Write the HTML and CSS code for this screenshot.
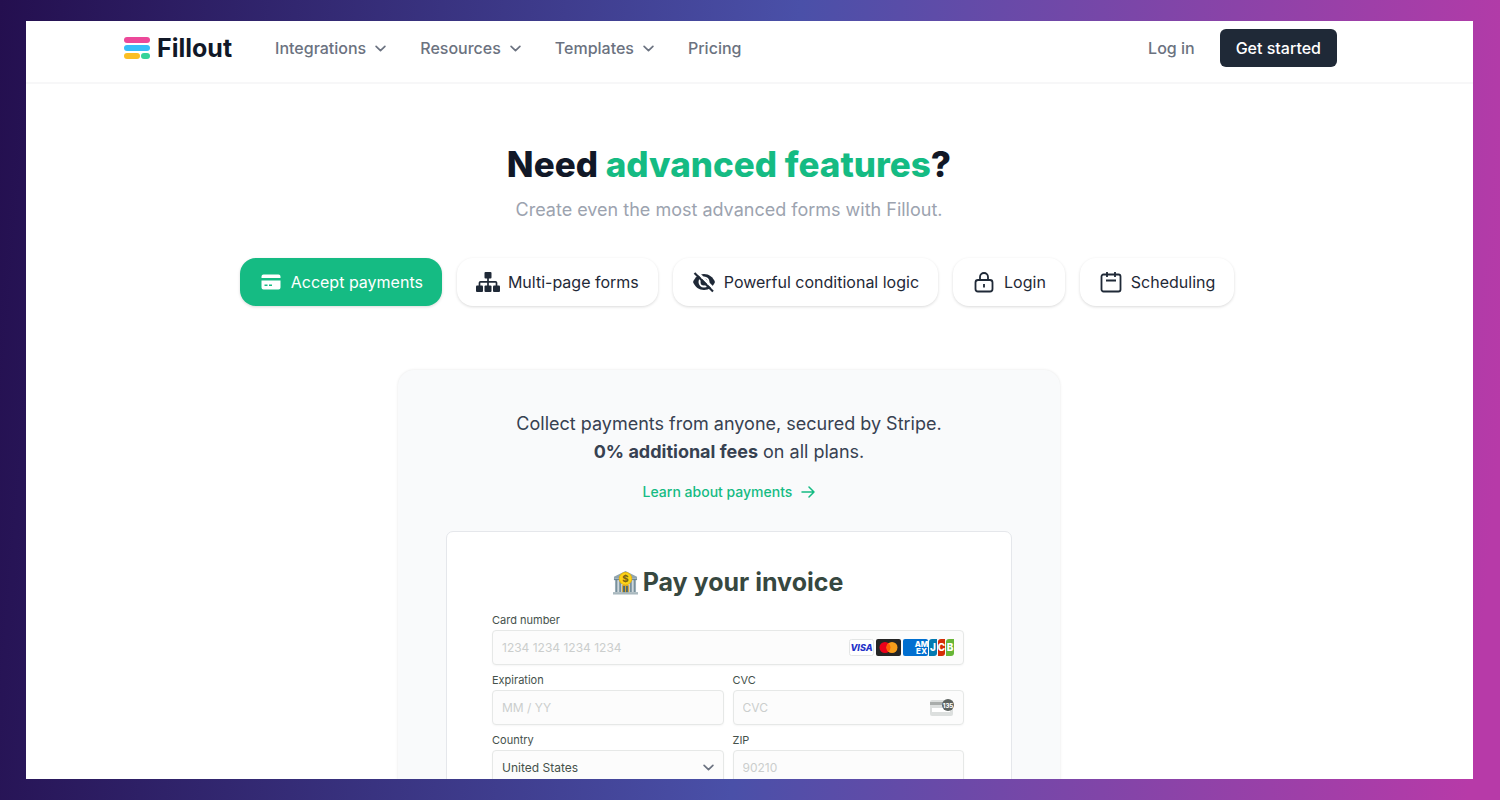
FILE: index.html
```
<!DOCTYPE html>
<html lang="en">
<head>
    <meta charset="UTF-8">
    <meta name="viewport" content="width=device-width, initial-scale=1.0">
    <title>Fillout</title>
    <link rel="stylesheet" href="styles.css">
</head>
<body>
    <div class="page">
        <header class="header">
            <div class="header-inner">
                <a href="#" class="logo">
                    <svg width="26" height="22" viewBox="0 0 26 22">
                        <rect x="0" y="0" width="26" height="6" rx="3" fill="#ec4899"/>
                        <rect x="0" y="8" width="26" height="6" rx="3" fill="#38bdf8"/>
                        <rect x="0" y="16" width="16" height="6" rx="3" fill="#fbbf24"/>
                        <rect x="17" y="16" width="9" height="6" rx="3" fill="#34d399"/>
                    </svg>
                    <span>Fillout</span>
                </a>
                <nav class="nav">
                    <button type="button" class="nav-item">Integrations
                        <svg class="chevron" viewBox="0 0 10 6"><path d="M1 1l4 4 4-4"/></svg>
                    </button>
                    <button type="button" class="nav-item">Resources
                        <svg class="chevron" viewBox="0 0 10 6"><path d="M1 1l4 4 4-4"/></svg>
                    </button>
                    <button type="button" class="nav-item">Templates
                        <svg class="chevron" viewBox="0 0 10 6"><path d="M1 1l4 4 4-4"/></svg>
                    </button>
                    <a href="#" class="nav-item">Pricing</a>
                </nav>
                <div class="account">
                    <a href="#" class="nav-item">Log in</a>
                    <button type="button" class="start">Get started</button>
                </div>
            </div>
        </header>

        <main class="main">
            <h1 class="title">Need <span>advanced features</span>?</h1>
            <p class="subtitle">Create even the most advanced forms with Fillout.</p>

            <div class="tabs">
                <button type="button" class="tab active">
                    <svg width="24" height="24" viewBox="0 0 24 24" fill="currentColor">
                        <path d="M2.500 8V6.500a2 2 0 0 1 2-2h15a2 2 0 0 1 2 2V8z"/>
                        <path fill-rule="evenodd" d="M2.500 10.500h19v7a2 2 0 0 1-2 2h-15a2 2 0 0 1-2-2zM5.500 14.500v1.500h3v-1.500zM10 14.500v1.500h3v-1.500z"/>
                    </svg>
                    Accept payments
                </button>
                <button type="button" class="tab">
                    <svg width="24" height="24" viewBox="0 0 24 24" fill="currentColor">
                        <rect x="8.500" y="2" width="7" height="6.500" rx="1"/>
                        <rect x="0" y="15.500" width="7" height="6.500" rx="1"/>
                        <rect x="8.500" y="15.500" width="7" height="6.500" rx="1"/>
                        <rect x="17" y="15.500" width="7" height="6.500" rx="1"/>
                        <path d="M12 8v8M3.500 16v-3.200a1 1 0 0 1 1-1h15a1 1 0 0 1 1 1V16" fill="none" stroke="currentColor" stroke-width="1.700"/>
                    </svg>
                    Multi-page forms
                </button>
                <button type="button" class="tab">
                    <svg width="24" height="24" viewBox="0 0 24 24">
                        <path d="M1 12c2-5 6-8 11-8s9 3 11 8c-2 5-6 8-11 8s-9-3-11-8z" fill="currentColor"/>
                        <circle cx="12" cy="12" r="4.500" fill="none" stroke="#fff" stroke-width="2"/>
                        <path d="M4.500 1.500L23 20" stroke="#fff" stroke-width="2.500"/>
                        <path d="M2.500 3L21 21.500" stroke="currentColor" stroke-width="2.200"/>
                    </svg>
                    Powerful conditional logic
                </button>
                <button type="button" class="tab">
                    <svg width="24" height="24" viewBox="0 0 24 24" fill="none" stroke="currentColor" stroke-width="1.800">
                        <rect x="3.500" y="10" width="17" height="11.500" rx="2.500"/>
                        <path d="M8 10V7a4 4 0 0 1 8 0v3M12 14v3.500"/>
                    </svg>
                    Login
                </button>
                <button type="button" class="tab">
                    <svg width="24" height="24" viewBox="0 0 24 24" fill="none" stroke="currentColor" stroke-width="1.800">
                        <rect x="2.500" y="4.500" width="19" height="17" rx="2"/>
                        <path d="M8 2v5M16 2v5M7 10.500h10"/>
                    </svg>
                    Scheduling
                </button>
            </div>

            <section class="card">
                <p class="card-text">Collect payments from anyone, secured by Stripe.<br><strong>0% additional fees</strong> on all plans.</p>
                <a href="#" class="learn">Learn about payments
                    <svg width="14" height="12" viewBox="0 0 14 12"><path d="M1 6h12M8 1l5 5-5 5"/></svg>
                </a>

                <form class="invoice">
                    <h2 class="invoice-title">
                        <!-- bank with coin -->
                        <svg width="25" height="25" viewBox="0 0 26 26">
                            <path d="M1 7L13 1l12 6v3H1z" fill="#90a4ae"/>
                            <rect x="2" y="9" width="22" height="14" fill="#cfd8dc"/>
                            <path d="M3.500 10v13M7.500 10v13M18.500 10v13M22.500 10v13" stroke="#78909c" stroke-width="2"/>
                            <path d="M1 10h24" stroke="#607d8b"/>
                            <rect x="10" y="16" width="6" height="8" fill="#4c6a70"/>
                            <path d="M10 16h6v8M13 16v8M10 16v8" fill="none" stroke="#e0a526"/>
                            <rect x="0" y="23" width="26" height="2.500" fill="#a9b8be"/>
                            <circle cx="13" cy="9" r="6.500" fill="#fdd316" stroke="#e8b407"/>
                            <text x="13" y="12.500" class="coin">$</text>
                        </svg>
                        Pay your invoice
                    </h2>
                    <div class="fields">
                        <div class="field wide">
                            <label for="number">Card number</label>
                            <div class="control">
                                <input type="text" id="number" placeholder="1234 1234 1234 1234">
                                <svg width="105" height="18" viewBox="0 0 105 18">
                                    <rect x="0.500" y="0.500" width="24" height="16" rx="2" fill="#fff" stroke="#e3e5e5"/>
                                    <text x="12.500" y="12" class="visa">VISA</text>
                                    <rect x="27" y="0" width="25" height="17" rx="2" fill="#252525"/>
                                    <circle cx="36" cy="8.500" r="5.500" fill="#eb001b"/>
                                    <circle cx="43" cy="8.500" r="5.500" fill="#f79e1b"/>
                                    <path d="M39.500 4.300a5.500 5.500 0 0 1 0 8.400a5.500 5.500 0 0 1 0-8.400z" fill="#ff5f00"/>
                                    <rect x="54" y="0" width="25" height="17" rx="2" fill="#016fd0"/>
                                    <text x="72.500" y="8" class="amex">AM</text>
                                    <text x="72.500" y="15" class="amex">EX</text>
                                    <path d="M80 3q0-3 3-3h5v14q0 3-3 3h-5z" fill="#047ab1"/>
                                    <path d="M89 3q0-3 3-3h4v14q0 3-3 3h-4z" fill="#d42d06"/>
                                    <path d="M97 3q0-3 3-3h5v14q0 3-3 3h-5z" fill="#67b637"/>
                                    <text x="84" y="12" class="jcb">J</text>
                                    <text x="92.500" y="12" class="jcb">C</text>
                                    <text x="101" y="12" class="jcb">B</text>
                                </svg>
                            </div>
                        </div>
                        <div class="field">
                            <label for="expiration">Expiration</label>
                            <div class="control">
                                <input type="text" id="expiration" placeholder="MM / YY">
                            </div>
                        </div>
                        <div class="field">
                            <label for="cvc">CVC</label>
                            <div class="control">
                                <input type="text" id="cvc" placeholder="CVC">
                                <svg width="24" height="18" viewBox="0 0 24 18">
                                    <rect x="0" y="1" width="23" height="16" rx="2" fill="#dcdfde"/>
                                    <rect x="0" y="3" width="23" height="3" fill="#a9adab"/>
                                    <rect x="2" y="9" width="18" height="4" fill="#fff"/>
                                    <circle cx="18" cy="6" r="6" fill="#5c625f"/>
                                    <text x="18" y="8.500" class="code">135</text>
                                </svg>
                            </div>
                        </div>
                        <div class="field">
                            <label for="country">Country</label>
                            <div class="control">
                                <select id="country">
                                    <option>United States</option>
                                </select>
                                <svg class="chevron" viewBox="0 0 10 6"><path d="M1 1l4 4 4-4"/></svg>
                            </div>
                        </div>
                        <div class="field">
                            <label for="zip">ZIP</label>
                            <div class="control">
                                <input type="text" id="zip" placeholder="90210">
                            </div>
                        </div>
                    </div>
                </form>
            </section>
        </main>
    </div>
</body>
</html>
```
FILE: styles.css
```
* {
    box-sizing: border-box;
}

body {
    height: 100vh;
    margin: 0;
    padding: 21px 27px 21px 26px;
    overflow: hidden;
    background: linear-gradient(95deg, #240f4f, #4a50a8 51%, #b73aa8 98%);
    font-family: Inter, "Liberation Sans", sans-serif;
    color: #1f2937;
}

button, input, select {
    font-family: inherit;
}

button {
    border: none;
    background: none;
    cursor: pointer;
}

a {
    text-decoration: none;
}

.page {
    height: 100%;
    overflow: hidden;
    background: #fff;
}

.header {
    padding: 8px 38px 15px 0;
    border-bottom: 2px solid #f7f7f8;
}

.header-inner {
    display: flex;
    align-items: center;
    max-width: 1213px;
    margin: 0 auto;
}

.logo {
    display: flex;
    align-items: center;
    gap: 7px;
    margin-right: 43px;
    font-size: 25px;
    line-height: 32px;
    font-weight: 700;
    color: #111827;
}

.nav {
    display: flex;
    gap: 34px;
}

.nav-item {
    display: flex;
    align-items: center;
    gap: 9px;
    padding: 0;
    font-size: 16px;
    line-height: 24px;
    font-weight: 500;
    color: #6b7280;
}

.chevron {
    width: 11px;
    height: 7px;
    fill: none;
    stroke: #6b7280;
    stroke-width: 1.5;
    stroke-linecap: round;
    stroke-linejoin: round;
}

.account {
    display: flex;
    align-items: center;
    gap: 25px;
    margin-left: auto;
}

.start {
    padding: 7px 16px;
    border-radius: 6px;
    background: #1f2937;
    color: #fff;
    font-size: 16px;
    line-height: 24px;
    font-weight: 500;
}

.main {
    display: flex;
    flex-direction: column;
    align-items: center;
    padding: 60px 41px 0 0;
}

.title {
    margin: 0;
    font-size: 35px;
    line-height: 40px;
    font-weight: 800;
    color: #111827;
}

.title span {
    color: #15bb83;
}

.subtitle {
    margin: 12px 0 34px;
    font-size: 18px;
    line-height: 28px;
    color: #9ca3af;
}

.tabs {
    display: flex;
    gap: 15px;
    padding-left: 16px;
    margin-bottom: 64px;
}

.tab {
    display: flex;
    align-items: center;
    gap: 8px;
    padding: 12px 19px;
    border-radius: 16px;
    box-shadow: 0 1px 3px rgba(0, 0, 0, 0.15);
    font-size: 16px;
    line-height: 24px;
    color: #1f2937;
    white-space: nowrap;
}

.tab.active {
    background: #15bb83;
    color: #fff;
}

.card {
    display: flex;
    flex-direction: column;
    align-items: center;
    width: 100%;
    max-width: 662px;
    padding: 40px 48px;
    border-radius: 16px;
    background: #f9fafb;
    box-shadow: 0 0 3px rgba(0, 0, 0, 0.1);
}

.card-text {
    margin: 0;
    text-align: center;
    font-size: 18px;
    line-height: 28px;
    color: #374151;
}

.learn {
    display: flex;
    align-items: center;
    gap: 9px;
    margin: 16px 0 29px;
    font-size: 14px;
    line-height: 20px;
    font-weight: 500;
    color: #15bb83;
}

.learn svg {
    fill: none;
    stroke: #15bb83;
    stroke-width: 1.5;
    stroke-linecap: round;
    stroke-linejoin: round;
}

.invoice {
    width: 100%;
    padding: 34px 47px 40px 45px;
    border: 1px solid #e5e7eb;
    border-radius: 7px;
    background: #fff;
}

.invoice-title {
    display: flex;
    align-items: center;
    justify-content: center;
    gap: 5px;
    margin: 0 0 15px;
    font-size: 25px;
    line-height: 32px;
    font-weight: 700;
    color: #374840;
}

.fields {
    display: grid;
    grid-template-columns: repeat(2, minmax(0, 1fr));
    gap: 8px 9px;
}

.wide {
    grid-column: span 2;
}

.field label {
    display: block;
    margin-bottom: 2px;
    font-size: 11px;
    line-height: 15px;
    color: #45514b;
}

.control {
    display: flex;
    align-items: center;
    height: 35px;
    padding: 0 9px;
    border: 1px solid #e6e8e7;
    border-radius: 4px;
    background: #fcfcfc;
    box-shadow: 0 1px 2px rgba(0, 0, 0, 0.04);
}

.control input,
.control select {
    flex: 1;
    min-width: 0;
    padding: 0;
    border: none;
    outline: none;
    appearance: none;
    background: none;
    font-size: 12px;
    line-height: 20px;
    color: #45514b;
}

.control input::placeholder {
    color: #cbcecd;
}

.coin,
.visa,
.amex,
.jcb,
.code {
    font-family: Inter, sans-serif;
    text-anchor: middle;
    font-weight: 800;
    fill: #fff;
}

.coin {
    font-size: 10px;
    fill: #7a6414;
}

.visa {
    font-size: 9px;
    font-style: italic;
    fill: #2432c8;
}

.amex {
    font-size: 8px;
}

.jcb {
    font-size: 10px;
}

.code {
    font-size: 6px;
}
```
